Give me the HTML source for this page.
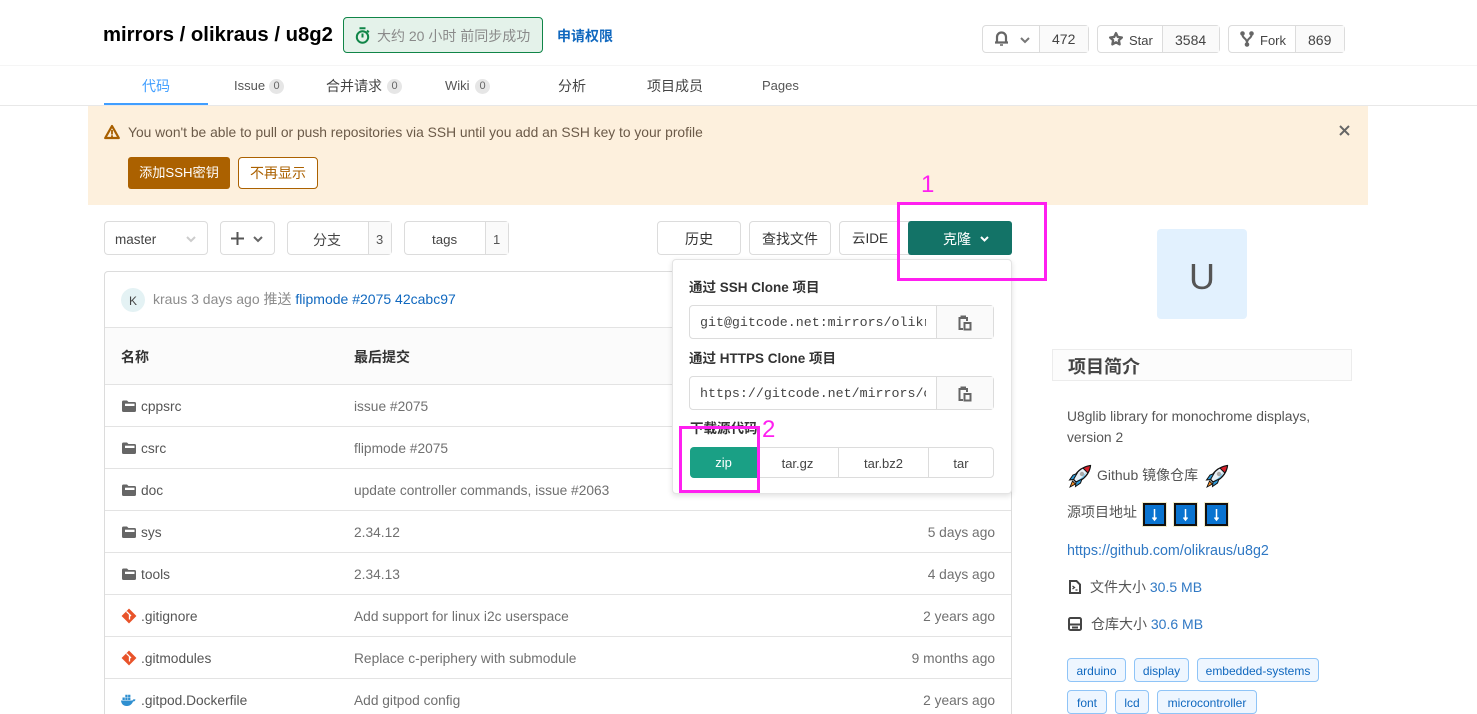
<!DOCTYPE html>
<html style="width:1477px;height:714px;overflow:hidden"><head><meta charset="utf-8"><style>
html,body{margin:0;padding:0;background:#fff}
body{width:1477px;height:714px;overflow:hidden;position:relative;font-family:"Liberation Sans","Noto Sans CJK SC",sans-serif;font-size:13.75px;color:#555}
.a,.t{position:absolute;box-sizing:border-box}
.t{white-space:nowrap;line-height:20px}
.b{position:absolute;box-sizing:border-box;border:1px solid #dcdcdc;border-radius:4px;background:#fff}
.c{position:absolute;box-sizing:border-box;background:#fafafa;border-left:1px solid #dcdcdc}
.l{position:absolute;left:105px;width:906px;height:1px;background:#e3e3e3}
.m{font-family:"Liberation Mono",monospace}
.blue{color:#1068bf}
.z{font-size:14px}
.bd{position:absolute;width:15px;height:15px;border-radius:50%;background:#e6e6e6;color:#666;font-size:11px;line-height:15px;text-align:center}
.tag{position:absolute;box-sizing:border-box;height:24px;line-height:25px;border:1px solid #8fc4f7;border-radius:4px;background:#eef6ff;color:#1068bf;font-size:12px;text-align:center}
.p{position:absolute;box-sizing:border-box;border:3px solid #ff1ff0}
.arrow{position:absolute;top:503px;width:23px;height:23px;background:#0a74d0;border:2px solid #111;box-sizing:border-box;box-shadow:0 0 0 1px #f4ecc8}
svg{position:absolute;overflow:visible}
</style></head><body>
<div class="a" style="left:0;top:65px;width:1477px;height:1px;background:#f5f5f5"></div>
<div class="a" style="left:0;top:105px;width:1477px;height:1px;background:#e8e8e8"></div>

<div class="t" style="left:103px;top:24px;font-size:20.3px;font-weight:bold;color:#000;line-height:22px">mirrors / olikraus / u8g2</div>
<div class="a" style="left:343px;top:17px;width:200px;height:36px;border:1px solid #108548;border-radius:4px;background:#e4f2ea"></div>
<svg style="left:355px;top:27px" width="15" height="17" viewBox="0 0 15 17" fill="none" stroke="#108548" stroke-width="2"><circle cx="7.500" cy="10" r="5.700"/><path d="M4.500 1.200h6M7.500 6.500v4M12 3.500l1.800 1.800"/></svg>
<div class="t z" style="left:377px;top:26px;color:#8a8a8a">大约 20 小时 前同步成功</div>
<div class="t blue z" style="left:557px;top:26px;font-weight:bold">申请权限</div>

<div class="b" style="left:982px;top:25px;width:107px;height:28px"></div>
<div class="c" style="left:1039px;top:26px;width:49px;height:26px"></div>
<svg style="left:994px;top:31px" width="15" height="15" viewBox="0 0 15 15" fill="none" stroke="#666" stroke-width="2.200"><path d="M3 11V6a4.500 4.500 0 0 1 9 0v5M1 11.500h13"/><path d="M6 14h3" stroke-width="1.500"/></svg>
<svg style="left:1020px;top:37px" width="10" height="6" viewBox="0 0 10 6" fill="none" stroke="#777" stroke-width="2"><path d="M1 1l4 4 4-4"/></svg>
<div class="t z" style="left:1052px;top:29px;color:#444">472</div>

<div class="b" style="left:1097px;top:25px;width:123px;height:28px"></div>
<div class="c" style="left:1162px;top:26px;width:57px;height:26px"></div>
<svg style="left:1108px;top:31px" width="16" height="16" viewBox="0 0 15 15" fill="none" stroke="#666" stroke-width="2.200"><path d="M7.500 2l1.700 3.600 3.800.5-2.800 2.600.7 3.800-3.400-1.900-3.400 1.900.7-3.800L2 6.100l3.800-.5z" stroke-linejoin="round"/></svg>
<div class="t" style="left:1129px;top:31px;font-size:13px;color:#444">Star</div>
<div class="t z" style="left:1175px;top:30px;color:#444">3584</div>

<div class="b" style="left:1228px;top:25px;width:117px;height:28px"></div>
<div class="c" style="left:1295px;top:26px;width:49px;height:26px"></div>
<svg style="left:1240px;top:31px" width="14" height="16" viewBox="0 0 14 16" fill="none" stroke="#666" stroke-width="2"><circle cx="2.500" cy="2.500" r="1.300" fill="#666"/><circle cx="11.500" cy="2.500" r="1.300" fill="#666"/><circle cx="7" cy="13.500" r="1.300" fill="#666"/><path d="M2.500 4c0 3.500 4.500 3 4.500 8M11.500 4c0 3.500-4.500 3-4.500 8"/></svg>
<div class="t" style="left:1260px;top:31px;font-size:13px;color:#444">Fork</div>
<div class="t z" style="left:1308px;top:30px;color:#444">869</div>

<div class="t z" style="left:104px;top:76px;width:104px;text-align:center;color:#409eff">代码</div>
<div class="a" style="left:104px;top:103px;width:104px;height:2px;background:#409eff"></div>
<div class="t" style="left:234px;top:76px;color:#555;font-size:13px">Issue</div><div class="bd" style="left:269px;top:79px">0</div>
<div class="t z" style="left:326px;top:76px;color:#444">合并请求</div><div class="bd" style="left:387px;top:79px">0</div>
<div class="t" style="left:445px;top:76px;font-size:13px">Wiki</div><div class="bd" style="left:475px;top:79px">0</div>
<div class="t z" style="left:558px;top:76px;color:#444">分析</div>
<div class="t z" style="left:647px;top:76px;color:#444">项目成员</div>
<div class="t" style="left:762px;top:76px;color:#555;font-size:13px">Pages</div>

<div class="a" style="left:88px;top:106px;width:1280px;height:99px;background:#fdf0dd"></div>
<svg style="left:104px;top:124px" width="16" height="16" viewBox="0 0 16 16"><path d="M8 2L1.200 14h13.600z" fill="none" stroke="#a85f00" stroke-width="2.200" stroke-linejoin="round"/><path d="M8 6v4.500M8 11.300v1.700" stroke="#a85f00" stroke-width="1.800"/></svg>
<div class="t" style="left:128px;top:122px;color:#6b5a48;font-size:13.830px">You won't be able to pull or push repositories via SSH until you add an SSH key to your profile</div>
<svg style="left:1339.500px;top:125.500px" width="9" height="9" viewBox="0 0 9 9" stroke="#666" stroke-width="2"><path d="M0 0l9 9M9 0L0 9"/></svg>
<div class="a" style="left:128px;top:157px;width:102px;height:32px;background:#ab6100;border-radius:3px;color:#fff;text-align:center;line-height:32px;font-size:13.200px">添加SSH密钥</div>
<div class="a z" style="left:238px;top:157px;width:80px;height:32px;background:#fff;border:1px solid #ab6100;border-radius:4px;color:#ab6100;text-align:center;line-height:30px">不再显示</div>

<div class="b" style="left:104px;top:221px;width:104px;height:34px"></div>
<div class="t" style="left:115px;top:230px;font-size:13.500px;color:#444">master</div>
<svg style="left:186px;top:236px" width="10" height="6" viewBox="0 0 10 6" fill="none" stroke="#ccc" stroke-width="2"><path d="M1 1l4 4 4-4"/></svg>
<div class="b" style="left:220px;top:221px;width:55px;height:34px"></div>
<svg style="left:231px;top:232px" width="13" height="13" viewBox="0 0 13 13" stroke="#555" stroke-width="2"><path d="M6.500 0v13M0 6.500h13"/></svg>
<svg style="left:253px;top:236px" width="10" height="6" viewBox="0 0 10 6" fill="none" stroke="#666" stroke-width="2"><path d="M1 1l4 4 4-4"/></svg>
<div class="b" style="left:287px;top:221px;width:105px;height:34px"></div><div class="c" style="left:368px;top:222px;width:23px;height:32px"></div>
<div class="t z" style="left:313px;top:230px;color:#444">分支</div><div class="t" style="left:376px;top:230px;font-size:13px;color:#555">3</div>
<div class="b" style="left:404px;top:221px;width:105px;height:34px"></div><div class="c" style="left:485px;top:222px;width:23px;height:32px"></div>
<div class="t" style="left:432px;top:230px;font-size:13.300px;color:#444">tags</div><div class="t" style="left:493px;top:230px;font-size:13px;color:#555">1</div>

<div class="b z" style="left:657px;top:221px;width:84px;height:34px;text-align:center;line-height:34px;color:#333">历史</div>
<div class="b z" style="left:749px;top:221px;width:82px;height:34px;text-align:center;line-height:34px;color:#333">查找文件</div>
<div class="b" style="left:839px;top:221px;width:90px;height:34px"></div>
<div class="t" style="left:852px;top:229px;color:#333;font-size:13.500px">云IDE</div>
<div class="a" style="left:908px;top:221px;width:104px;height:34px;background:#137367;border-radius:3px"></div>
<div class="t z" style="left:943px;top:229px;color:#fff">克隆</div>
<svg style="left:980px;top:236px" width="9" height="6" viewBox="0 0 9 6" fill="none" stroke="#fff" stroke-width="2"><path d="M1 1l3.500 3.500L8 1"/></svg>

<div class="b" style="left:1157px;top:229px;width:90px;height:90px;background:#e2f1fe;border:0;border-radius:4px"></div>
<div class="t" style="left:1157px;top:252px;width:90px;text-align:center;font-size:36px;line-height:50px;color:#555">U</div>

<div class="a" style="left:104px;top:271px;width:908px;height:443px;border:1px solid #dcdcdc;border-radius:4px 4px 0 0;border-bottom:0"></div>
<div class="a" style="left:105px;top:328px;width:906px;height:56px;background:#fbfbfb"></div>
<div class="l" style="top:327px"></div><div class="l" style="top:384px"></div>
<div class="a" style="left:121px;top:288px;width:24px;height:24px;border-radius:50%;background:#e4f2f4;color:#444;font-size:12px;line-height:26px;text-align:center">K</div>
<div class="t z" style="left:153px;top:289px;color:#8c8c8c">kraus 3 days ago 推送 <span style="color:#1068bf">flipmode #2075</span> <span style="color:#1068bf">42cabc97</span></div>
<div class="t z" style="left:121px;top:347px;font-weight:bold;color:#333">名称</div>
<div class="t z" style="left:354px;top:347px;font-weight:bold;color:#333">最后提交</div>

<div class="l" style="top:426px"></div><div class="l" style="top:468px"></div><div class="l" style="top:510px"></div><div class="l" style="top:552px"></div><div class="l" style="top:594px"></div><div class="l" style="top:636px"></div><div class="l" style="top:678px"></div>

<svg width="0" height="0" style="left:0;top:0"><defs>
<g id="f"><path d="M0 2a1.500 1.500 0 0 1 1.500-1.500h3.500l1.500 1.500h6a1.500 1.500 0 0 1 1.500 1.500v7a1.500 1.500 0 0 1-1.500 1.500h-11A1.500 1.500 0 0 1 0 10.500z" fill="#666"/><rect x="3" y="3.700" width="9.500" height="2.300" fill="#fff"/></g>
<g id="g"><path d="M7 0l7 7-7 7-7-7z" fill="#e8532a" stroke="#e8532a" stroke-width=".6" stroke-linejoin="round"/><path d="M4.500 2.500l4.500 4.500M7.500 6v4.500" stroke="#fff" stroke-width="1.300"/></g>
</defs></svg>
<svg style="left:122px;top:400px" width="14" height="13"><use href="#f"/></svg><div class="t" style="left:141px;top:397px">cppsrc</div><div class="t" style="left:354px;top:397px;color:#707070">issue #2075</div>
<svg style="left:122px;top:442px" width="14" height="13"><use href="#f"/></svg><div class="t" style="left:141px;top:439px">csrc</div><div class="t" style="left:354px;top:439px;color:#707070">flipmode #2075</div>
<svg style="left:122px;top:484px" width="14" height="13"><use href="#f"/></svg><div class="t" style="left:141px;top:481px">doc</div><div class="t" style="left:354px;top:481px;color:#707070">update controller commands, issue #2063</div>
<svg style="left:122px;top:526px" width="14" height="13"><use href="#f"/></svg><div class="t" style="left:141px;top:523px">sys</div><div class="t" style="left:354px;top:523px;color:#707070">2.34.12</div><div class="t" style="right:482px;top:523px;color:#707070">5 days ago</div>
<svg style="left:122px;top:568px" width="14" height="13"><use href="#f"/></svg><div class="t" style="left:141px;top:565px">tools</div><div class="t" style="left:354px;top:565px;color:#707070">2.34.13</div><div class="t" style="right:482px;top:565px;color:#707070">4 days ago</div>
<svg style="left:122px;top:609px" width="14" height="14"><use href="#g"/></svg><div class="t" style="left:141px;top:607px">.gitignore</div><div class="t" style="left:354px;top:607px;color:#707070">Add support for linux i2c userspace</div><div class="t" style="right:482px;top:607px;color:#707070">2 years ago</div>
<svg style="left:122px;top:651px" width="14" height="14"><use href="#g"/></svg><div class="t" style="left:141px;top:649px">.gitmodules</div><div class="t" style="left:354px;top:649px;color:#707070">Replace c-periphery with submodule</div><div class="t" style="right:482px;top:649px;color:#707070">9 months ago</div>
<svg style="left:121px;top:694px" width="15" height="13" viewBox="0 0 15 13"><path d="M0 6.500h11.500c.5-1.500 1.500-1.500 3-1-.5 1.500-1 2-2.500 2-1 2.800-3 4.500-6.500 4.500C2.500 12 .3 10 0 6.500z" fill="#2f8fd0"/><path d="M1.500 3.500h2.300V6H1.500zM4.300 3.500h2.300V6H4.300zM7.100 3.500h2.300V6H7.100zM4.300.8h2.300v2.300H4.300zM7.100.8h2.300v2.300H7.100z" fill="#2f8fd0"/></svg><div class="t" style="left:141px;top:691px">.gitpod.Dockerfile</div><div class="t" style="left:354px;top:691px;color:#707070">Add gitpod config</div><div class="t" style="right:482px;top:691px;color:#707070">2 years ago</div>

<div class="a" style="left:672px;top:259px;width:340px;height:235px;background:#fff;border:1px solid #e4e4e4;border-radius:4px;box-shadow:0 2px 6px rgba(0,0,0,.12)"></div>
<div class="t" style="left:689px;top:278px;font-weight:bold;color:#333;font-size:13.500px">通过 SSH Clone 项目</div>
<div class="b" style="left:689px;top:305px;width:305px;height:34px"></div><div class="c" style="left:936px;top:306px;width:57px;height:32px"></div>
<div class="a m" style="left:700px;top:313px;width:226px;height:20px;overflow:hidden;white-space:nowrap;line-height:20px;font-size:13.300px;color:#444">git@gitcode.net:mirrors/olikraus/u8g2.git</div>
<div class="t" style="left:689px;top:349px;font-weight:bold;color:#333;font-size:13.500px">通过 HTTPS Clone 项目</div>
<div class="b" style="left:689px;top:376px;width:305px;height:34px"></div><div class="c" style="left:936px;top:377px;width:57px;height:32px"></div>
<div class="a m" style="left:700px;top:384px;width:226px;height:20px;overflow:hidden;white-space:nowrap;line-height:20px;font-size:13.300px;color:#444">https://gitcode.net/mirrors/olikraus/u8g2.git</div>
<svg style="left:958px;top:315px" width="14" height="16" viewBox="0 0 14 16" fill="none" stroke="#666" stroke-width="2"><path d="M5 14H1.500V3H9v3M3.500 3V1.500h3.500V3"/><rect x="6.500" y="8" width="6" height="6.500"/></svg>
<svg style="left:958px;top:386px" width="14" height="16" viewBox="0 0 14 16" fill="none" stroke="#666" stroke-width="2"><path d="M5 14H1.500V3H9v3M3.500 3V1.500h3.500V3"/><rect x="6.500" y="8" width="6" height="6.500"/></svg>
<div class="t" style="left:690px;top:419px;font-weight:bold;color:#333;font-size:13.500px">下载源代码</div>
<div class="b" style="left:690px;top:447px;width:304px;height:31px"></div>
<div class="a" style="left:690px;top:447px;width:67px;height:31px;background:#1aa085;border-radius:4px 0 0 4px;color:#fff;text-align:center;line-height:32px;font-size:13px">zip</div>
<div class="t" style="left:757px;top:454px;width:81px;text-align:center;font-size:13px;color:#444">tar.gz</div>
<div class="a" style="left:838px;top:448px;width:1px;height:29px;background:#dcdcdc"></div>
<div class="t" style="left:839px;top:454px;width:89px;text-align:center;font-size:13px;color:#444">tar.bz2</div>
<div class="a" style="left:928px;top:448px;width:1px;height:29px;background:#dcdcdc"></div>
<div class="t" style="left:929px;top:454px;width:64px;text-align:center;font-size:13px;color:#444">tar</div>

<div class="p" style="left:897px;top:202px;width:150px;height:79px"></div>
<div class="p" style="left:679px;top:426px;width:81px;height:67px"></div>
<div class="t" style="left:921px;top:173px;font-size:24px;line-height:24px;color:#ff1ff0">1</div>
<div class="t" style="left:762px;top:418px;font-size:24px;line-height:24px;color:#ff1ff0">2</div>

<div class="a" style="left:1052px;top:349px;width:300px;height:32px;background:#fcfcfc;border:1px solid #ececec"></div>
<div class="t" style="left:1068px;top:357px;font-size:18px;font-weight:bold;color:#444">项目简介</div>
<div class="t" style="left:1067px;top:406px;font-size:13.850px;line-height:21px;color:#555">U8glib library for monochrome displays,<br>version 2</div>
<svg width="0" height="0" style="left:0;top:0"><defs><g id="r"><path d="M8 18l-2.500-2.500C7 9 13 3 22.500 1.500 21.500 10 15 16.500 8 18z" fill="#e9f1f7" stroke="#111" stroke-width="1.300" stroke-linejoin="round"/><path d="M22.500 1.500c-2.700.4-5.300 1.300-7.500 2.600l4.800 4.800c1.400-2.200 2.400-4.700 2.700-7.400z" fill="#d8202a" stroke="#111"/><circle cx="14" cy="10" r="2.200" fill="#aaa"/><path d="M9.500 16c2 0 6-3.500 8-7.500.5 3-4 8-7 9z" fill="#6cc0ea"/><path d="M5.500 15.500L1.500 16l3.500-5 4-1.500zM8 18l-.5 4.500 5-3.500 1.500-4z" fill="#2f9bd8" stroke="#111"/><path d="M4.500 17l3 3-5.500 3z" fill="#f58a1f" stroke="#111" stroke-width=".9"/></g></defs></svg>
<svg style="left:1068px;top:464px" width="24" height="24" viewBox="0 0 24 24"><use href="#r"/></svg>
<div class="t z" style="left:1097px;top:465px">Github 镜像仓库</div>
<svg style="left:1205px;top:464px" width="24" height="24" viewBox="0 0 24 24"><use href="#r"/></svg>
<div class="t z" style="left:1067px;top:502px">源项目地址</div>
<div class="arrow" style="left:1143px"></div><div class="arrow" style="left:1174px"></div><div class="arrow" style="left:1205px"></div>
<svg style="left:1143px;top:503px" width="85" height="23" viewBox="0 0 85 23" fill="none" stroke="#fff" stroke-width="1.500"><path d="M11.500 6v11M9.500 14.500l2 2.500 2-2.500M42.500 6v11M40.500 14.500l2 2.500 2-2.500M73.500 6v11M71.500 14.500l2 2.500 2-2.500"/></svg>
<div class="t" style="left:1067px;top:541px;font-size:14.300px;color:#2f78c4">https://github.com/olikraus/u8g2</div>
<svg style="left:1069px;top:580px" width="12" height="14" viewBox="0 0 12 14" fill="none" stroke="#444" stroke-width="2"><path d="M1 1h6.500L11 4.500V13H1z"/><path d="M3.500 6l2 1.500-2 1.500M6.500 10h2" stroke-width="1.300"/></svg>
<div class="t z" style="left:1090px;top:577px">文件大小 <span style="color:#2f78c4">30.5 MB</span></div>
<svg style="left:1068px;top:617px" width="14" height="14" viewBox="0 0 14 14" fill="none" stroke="#444" stroke-width="2"><rect x="1" y="1" width="12" height="12" rx="1.500"/><path d="M1 7.500h12M4 10.500h6"/></svg>
<div class="t z" style="left:1091px;top:614px">仓库大小 <span style="color:#2f78c4">30.6 MB</span></div>
<div class="tag" style="left:1067px;top:658px;width:59px">arduino</div>
<div class="tag" style="left:1134px;top:658px;width:55px">display</div>
<div class="tag" style="left:1197px;top:658px;width:122px">embedded-systems</div>
<div class="tag" style="left:1067px;top:690px;width:40px">font</div>
<div class="tag" style="left:1115px;top:690px;width:34px">lcd</div>
<div class="tag" style="left:1157px;top:690px;width:100px">microcontroller</div>
</body></html>
